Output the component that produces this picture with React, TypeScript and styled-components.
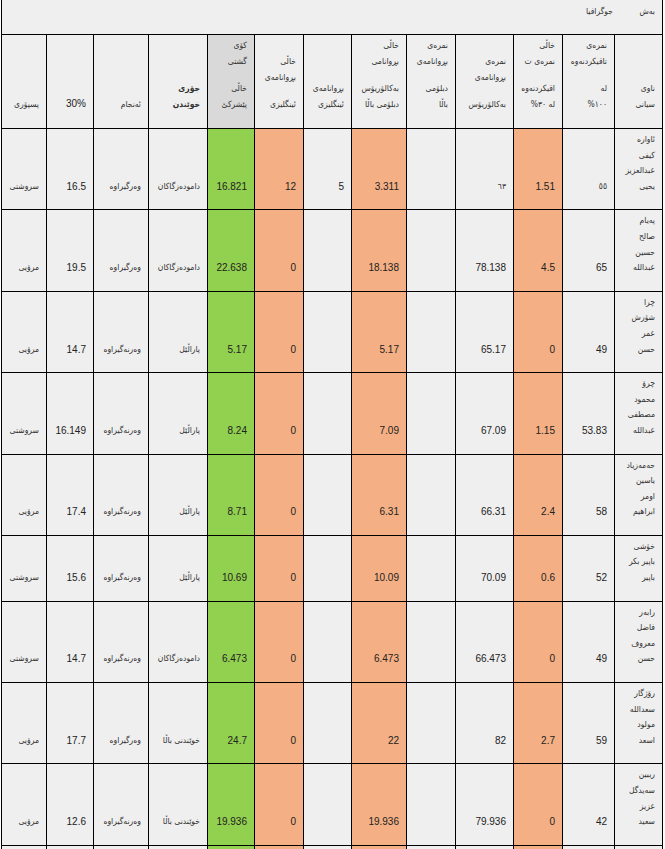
import React from "react";
import styled, { createGlobalStyle } from "styled-components";

const GlobalStyle = createGlobalStyle`
  html, body { margin: 0; padding: 0; background: #ffffff; }
  body { font-family: "Liberation Sans", "DejaVu Sans", sans-serif; }
`;

type Tone = "plain" | "green" | "orange" | "gray";

const toneBg: Record<Tone, string> = {
  plain: "#efefef",
  green: "#92d050",
  orange: "#f4b084",
  gray: "#d9d9d9",
};

const COLS = [48, 52, 49, 58, 49, 55, 48, 49, 47, 59, 55, 47, 45];
const BODY_TONES: Tone[] = [
  "plain", "plain", "orange", "plain", "plain", "orange", "plain",
  "orange", "green", "plain", "plain", "plain", "plain",
];

const isArabic = (s: string) => /[\u0600-\u06FF]/.test(s);

const Sheet = styled.div`
  direction: rtl;
  display: grid;
  grid-template-columns: ${COLS.map((w) => `${w}px`).join(" ")};
  width: 662px;
  box-sizing: border-box;
  margin-left: 1px;
  border-right: 1px solid #000;
  font-family: "Liberation Sans", "DejaVu Sans", sans-serif;
  font-size: 10px;
  color: #222;
`;

const TopBar = styled.div`
  grid-column: 1 / -1;
  display: flex;
  align-items: flex-start;
  height: 35px;
  box-sizing: border-box;
  padding-top: 3px;
  background: ${toneBg.plain};
  border-left: 1px solid #000;
  border-bottom: 1px solid #000;
  line-height: 16px;
`;

const TopLabel = styled.span`
  width: 48px;
  box-sizing: border-box;
  padding-right: 7px;
`;

const TopValue = styled.span`
  padding-right: 1px;
`;

const Row = styled.div`
  display: contents;
`;

const HeadCell = styled.div<{ $tone: Tone; $bold?: boolean }>`
  display: flex;
  flex-direction: column;
  justify-content: flex-end;
  gap: 11px;
  box-sizing: border-box;
  padding: 2px 7px 16px 1px;
  background: ${(p) => toneBg[p.$tone]};
  border-left: 1px solid #000;
  border-bottom: 1px solid #000;
  line-height: 16px;
  font-weight: ${(p) => (p.$bold ? 700 : 400)};
  white-space: nowrap;
  overflow: hidden;
`;

const Para = styled.div`
  display: flex;
  flex-direction: column;
`;

const Line = styled.span<{ $ar?: boolean }>`
  display: block;
  font-family: ${(p) =>
    p.$ar
      ? `"DejaVu Sans Condensed", "DejaVu Sans", sans-serif`
      : `"Liberation Sans", "DejaVu Sans", sans-serif`};
  font-size: ${(p) => (p.$ar ? "8.5px" : "10px")};
  color: ${(p) => (p.$ar ? "#333" : "#222")};
`;

const BodyCell = styled.div<{ $tone: Tone }>`
  display: flex;
  flex-direction: column;
  justify-content: flex-end;
  box-sizing: border-box;
  min-height: 35px;
  padding: 3px 7px 15px 1px;
  background: ${(p) => toneBg[p.$tone]};
  border-left: 1px solid #000;
  border-bottom: 1px solid #000;
  line-height: 15.6px;
  white-space: nowrap;
  overflow: hidden;
`;

type Head = { paras: string[][]; tone?: Tone; bold?: boolean };

const HEADS: Head[] = [
  { paras: [["ناوی", "سیانی"]] },
  { paras: [["نمرەی", "تاقیکردنەوە"], ["لە", "١٠٠%"]] },
  { paras: [["خاڵی", "نمرەی ت"], ["اقیکردنەوە", "لە ٣٠%"]] },
  { paras: [["نمرەی", "بڕوانامەی"], ["بەکالۆریۆس"]] },
  { paras: [["نمرەی", "بڕوانامەی"], ["دبلۆمی", "باڵا"]] },
  { paras: [["خاڵی", "بڕوانامی"], ["بەکالۆریۆس", "دبلۆمی باڵا"]] },
  { paras: [["بڕوانامەی", "ئینگلیزی"]] },
  { paras: [["خاڵی", "بڕوانامەی"], ["ئینگلیزی"]] },
  { paras: [["کۆی", "گشتی"], ["خاڵی", "پێشرکێ"]], tone: "gray" },
  { paras: [["جۆری", "خوێندن"]], bold: true },
  { paras: [["ئەنجام"]] },
  { paras: [["30%"]] },
  { paras: [["پسپۆری"]] },
];

type Student = { name: string[]; values: string[] };

const STUDENTS: Student[] = [
  {
    name: ["ئاوارە", "کیفی", "عبدالعزیز", "یحیی"],
    values: ["٥٥", "1.51", "٦٣", "", "3.311", "5", "12", "16.821", "دامودەزگاکان", "وەرگیراوە", "16.5", "سروشتی"],
  },
  {
    name: ["پەیام", "صالح", "حسین", "عبداللە"],
    values: ["65", "4.5", "78.138", "", "18.138", "", "0", "22.638", "دامودەزگاکان", "وەرگیراوە", "19.5", "مرۆیی"],
  },
  {
    name: ["چرا", "شۆرش", "عمر", "حسن"],
    values: ["49", "0", "65.17", "", "5.17", "", "0", "5.17", "پاراڵێل", "وەرنەگیراوە", "14.7", "مرۆیی"],
  },
  {
    name: ["چرۆ", "محمود", "مصطفی", "عبداللە"],
    values: ["53.83", "1.15", "67.09", "", "7.09", "", "0", "8.24", "پاراڵێل", "وەرنەگیراوە", "16.149", "سروشتی"],
  },
  {
    name: ["حەمەزیاد", "یاسین", "اومر", "ابراهیم"],
    values: ["58", "2.4", "66.31", "", "6.31", "", "0", "8.71", "پاراڵێل", "وەرنەگیراوە", "17.4", "مرۆیی"],
  },
  {
    name: ["خۆشی", "باپیر بکر", "باپیر"],
    values: ["52", "0.6", "70.09", "", "10.09", "", "0", "10.69", "پاراڵێل", "وەرنەگیراوە", "15.6", "سروشتی"],
  },
  {
    name: ["رابەر", "فاضل", "معروف", "حسن"],
    values: ["49", "0", "66.473", "", "6.473", "", "0", "6.473", "دامودەزگاکان", "وەرنەگیراوە", "14.7", "سروشتی"],
  },
  {
    name: ["رۆژگار", "سعداللە", "مولود", "اسعد"],
    values: ["59", "2.7", "82", "", "22", "", "0", "24.7", "خوێندنی باڵا", "وەرگیراوە", "17.7", "مرۆیی"],
  },
  {
    name: ["ریبین", "سەیدگل", "عزیز", "سعید"],
    values: ["42", "0", "79.936", "", "19.936", "", "0", "19.936", "خوێندنی باڵا", "وەرنەگیراوە", "12.6", "مرۆیی"],
  },
  {
    name: [],
    values: ["", "", "", "", "", "", "", "", "", "", "", ""],
  },
];

export default function App() {
  return (
    <>
      <GlobalStyle />
      <Sheet>
        <TopBar>
          <TopLabel>
            <Line $ar>بەش</Line>
          </TopLabel>
          <TopValue>
            <Line $ar>جوگرافیا</Line>
          </TopValue>
        </TopBar>
        <Row>
          {HEADS.map((h, i) => (
            <HeadCell key={i} $tone={h.tone ?? "plain"} $bold={h.bold}>
              {h.paras.map((p, j) => (
                <Para key={j}>
                  {p.map((l, k) => (
                    <Line key={k} $ar={isArabic(l)}>
                      {l}
                    </Line>
                  ))}
                </Para>
              ))}
            </HeadCell>
          ))}
        </Row>
        {STUDENTS.map((s, r) => (
          <Row key={r}>
            <BodyCell $tone={BODY_TONES[0]}>
              {s.name.map((l, k) => (
                <Line key={k} $ar>
                  {l}
                </Line>
              ))}
            </BodyCell>
            {s.values.map((v, c) => (
              <BodyCell key={c} $tone={BODY_TONES[c + 1]}>
                <Line $ar={isArabic(v)}>{v}</Line>
              </BodyCell>
            ))}
          </Row>
        ))}
      </Sheet>
    </>
  );
}
